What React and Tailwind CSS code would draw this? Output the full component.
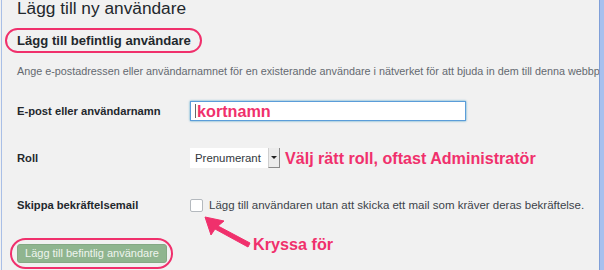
const pink = "text-[#f0306c]";

function Arrow() {
  return (
    <svg className="pointer-events-none absolute left-0 top-0" width="604" height="270" viewBox="0 0 604 270">
      <polygon
        points="205,217 224,221 218,226 250,243 248,247 215,229 211,235"
        fill="#f0306c"
        stroke="#f0306c"
        strokeWidth="1"
        strokeLinejoin="round"
      />
    </svg>
  );
}

function Row({ label, className = "", children }) {
  return (
    <div className={`flex items-center ${className}`}>
      <div className="w-[173px] shrink-0 text-[11.2px] font-bold text-[#23282d]">{label}</div>
      {children}
    </div>
  );
}

export default function App() {
  return (
    <div className="relative flex h-[270px] w-[604px] overflow-hidden bg-[#f1f1f1] font-['Liberation_Sans',Arial,sans-serif]">
      <div className="w-px shrink-0" />
      <div className="w-px shrink-0 bg-[#a9bfe6]" />
      <main className="relative min-w-0 flex-1 overflow-hidden pl-[15px]">
        <h1 className="-mt-px h-[23px] text-[17.3px] leading-[19px] text-[#23282d]">Lägg till ny användare</h1>

        <div className="relative mt-[9px] h-[20px]">
          <h2 className="text-[13.1px] font-bold leading-[20px] text-[#23282d]">Lägg till befintlig användare</h2>
          <div className="absolute left-[-12px] top-[-3px] h-[25px] w-[197px] rounded-full border-2 border-[#f0306c]" />
        </div>

        <p className="mt-[12px] h-[16px] whitespace-nowrap text-[10.8px] leading-[16px] text-[#646970]">
          Ange e-postadressen eller användarnamnet för en existerande användare i nätverket för att bjuda in dem till denna webbplats.
        </p>

        <Row label="E-post eller användarnamn" className="mt-[22px] h-[20px]">
          <div className="flex h-[20px] w-[276px] items-center border border-[#5b9dd9] bg-white pl-[4px] shadow-[0_0_2px_rgba(30,140,190,0.8)]">
            <span className="h-[14px] w-px bg-[#666]" />
            <span className={`ml-px text-[16.2px] font-bold leading-[18px] ${pink}`}>kortnamn</span>
          </div>
        </Row>

        <Row label="Roll" className="mt-[27px] h-[20px]">
          <div className="flex h-[20px] w-[90px] items-stretch bg-white">
            <span className="flex-1 pl-[5px] text-[11.4px] leading-[20px] text-[#32373c]">Prenumerant</span>
            <span className="flex w-[12px] items-center justify-center border-b border-l border-r border-b-[#8a8a8a] border-l-[#cfcfcf] border-r-[#8a8a8a] bg-[#ececec]">
              <span className="h-0 w-0 border-x-[3px] border-t-[3px] border-x-transparent border-t-[#222]" />
            </span>
          </div>
          <span className={`ml-[5px] text-[16.1px] font-bold leading-[20px] ${pink}`}>Välj rätt roll, oftast Administratör</span>
        </Row>

        <Row label="Skippa bekräftelsemail" className="mt-[29px] h-[16px]">
          <span className="h-[13px] w-[13px] shrink-0 rounded-[2px] border border-[#b4b9be] bg-white" />
          <span className="ml-[6px] whitespace-nowrap text-[11.5px] leading-[16px] text-[#3c434a]">
            Lägg till användaren utan att skicka ett mail som kräver deras bekräftelse.
          </span>
        </Row>

        <div className="mt-[31px] flex items-start">
          <div className="relative">
            <button
              type="button"
              className="block h-[19px] w-[150px] rounded-[3px] border border-[#84a984] bg-[#8fb58f] text-[11px] leading-[17px] text-[#eef4ee]"
            >
              Lägg till befintlig användare
            </button>
            <div className="absolute left-[-7px] top-[-6px] h-[31px] w-[163px] rounded-full border-2 border-[#f0306c]" />
          </div>
          <span className={`ml-[86px] mt-[-9px] text-[16.2px] font-bold leading-[18px] ${pink}`}>Kryssa för</span>
        </div>
      </main>
      <div className="w-px shrink-0 bg-[#7f9fd8]" />
      <div className="w-[4px] shrink-0 bg-[#a8c0ee]" />
      <Arrow />
    </div>
  );
}
